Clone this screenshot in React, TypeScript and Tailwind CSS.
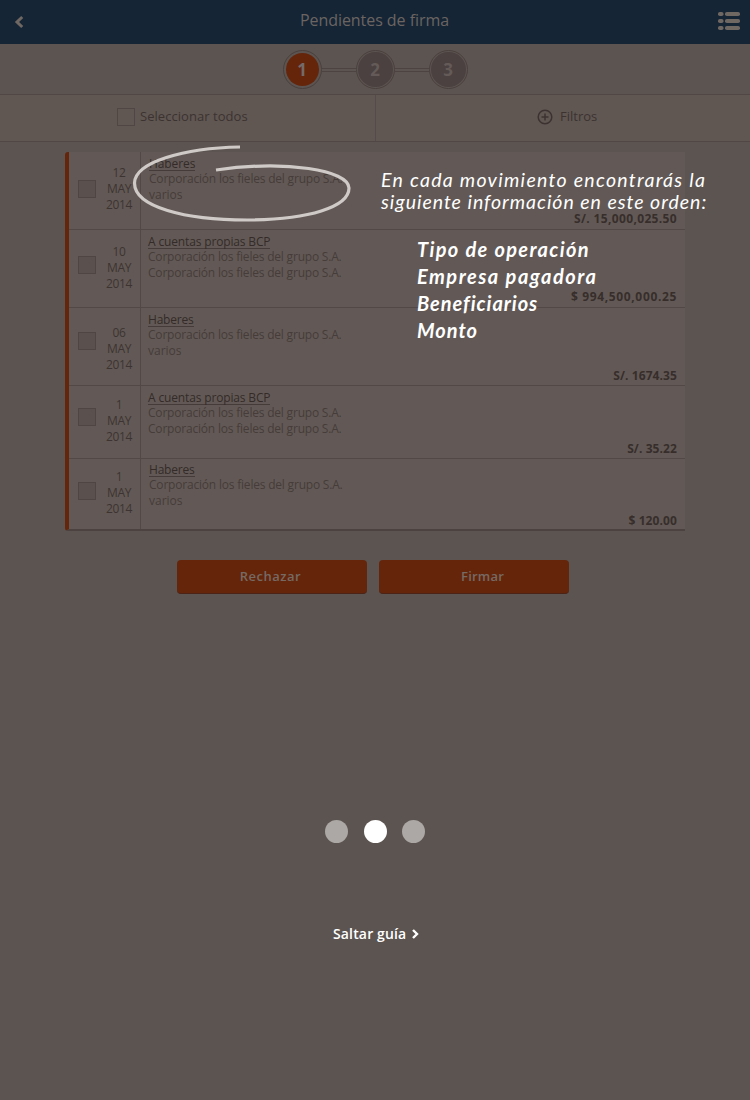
import React from "react";

type Movement = {
  day: string;
  title: string;
  titleTracking: string;
  beneficiary: string;
  amount: string;
  amountStyle: string;
  height: string;
  checkOffset: string;
  dateOffset: string;
  textOffset: string;
};

const COMPANY = "Corporación los fieles del grupo S.A.";

const movements: Movement[] = [
  { day: "12", title: "Haberes", titleTracking: "tracking-[-0.1px]", beneficiary: "varios", amount: "S/. 15,000,025.50", amountStyle: "tracking-[0.35px] pb-px", height: "h-[78px]", checkOffset: "mt-[28px]", dateOffset: "mt-[13px]", textOffset: "pt-[4px] pl-[8px]" },
  { day: "10", title: "A cuentas propias BCP", titleTracking: "tracking-[-0.15px]", beneficiary: COMPANY, amount: "$ 994,500,000.25", amountStyle: "tracking-[0.65px] pb-px", height: "h-[78px]", checkOffset: "mt-[26px]", dateOffset: "mt-[14px]", textOffset: "pt-[4px] pl-[7px]" },
  { day: "06", title: "Haberes", titleTracking: "tracking-[-0.2px]", beneficiary: "varios", amount: "S/. 1674.35", amountStyle: "tracking-[0.1px]", height: "h-[78px]", checkOffset: "mt-[24px]", dateOffset: "mt-[17px]", textOffset: "pt-[4px] pl-[7px]" },
  { day: "1", title: "A cuentas propias BCP", titleTracking: "tracking-[-0.15px]", beneficiary: COMPANY, amount: "S/. 35.22", amountStyle: "tracking-[0.1px]", height: "h-[73px]", checkOffset: "mt-[22px]", dateOffset: "mt-[11px]", textOffset: "pt-[4px] pl-[7px]" },
  { day: "1", title: "Haberes", titleTracking: "tracking-[-0.2px]", beneficiary: "varios", amount: "$ 120.00", amountStyle: "tracking-[0.1px] -mb-px", height: "h-[70px]", checkOffset: "mt-[23px]", dateOffset: "mt-[10px]", textOffset: "pt-[3px] pl-[8px]" },
];

function Header() {
  return (
    <header className="flex h-[44px] items-center bg-[#152536]">
      <svg className="ml-[14px] h-[14px] w-[10px]" viewBox="0 0 10 14" fill="none" stroke="#6f6762" strokeWidth="3">
        <path d="M8.200 2L3 7L8.200 12" />
      </svg>
      <h1 className="flex-1 pb-[4px] pl-[8px] text-center font-['Open_Sans',sans-serif] text-[16px] tracking-[-0.05px] text-[#6b6461]">
        Pendientes de firma
      </h1>
      <svg className="mr-[9px] mb-[2px] h-[20px] w-[24px]" viewBox="0 0 24 20" fill="#6f6762">
        {[1, 8, 15].map((y) => (
          <g key={y}>
            <rect x="1" y={y} width="5.500" height="4" rx="1.800" />
            <rect x="8" y={y} width="15" height="4" rx="1.800" />
          </g>
        ))}
      </svg>
    </header>
  );
}

function Step({ label, active }: { label: string; active?: boolean }) {
  return (
    <div className="flex h-[39px] w-[39px] shrink-0 items-center justify-center rounded-full border border-[#4a403d]">
      <div
        className={
          "flex items-center justify-center rounded-full pt-px font-['Open_Sans',sans-serif] text-[17px] font-bold " +
          (active ? "h-[33px] w-[33px] bg-[#65250b] text-[#736b67]" : "h-[35px] w-[35px] bg-[#4b4140] text-[#645b58]")
        }
      >
        {label}
      </div>
    </div>
  );
}

function Connector() {
  return <div className="h-[4px] flex-1 border-y border-[#4d4340]" />;
}

function Row({ m, last }: { m: Movement; last: boolean }) {
  return (
    <div className={"flex " + m.height + (last ? "" : " border-b border-[#524845]")}>
      <div className="flex w-[72px] border-r border-[#524845]">
        <div className={"ml-[9px] h-[18px] w-[18px] border border-[#4f4542] bg-[#5a504d] " + m.checkOffset} />
        <div className={"ml-[8px] w-[30px] text-center text-[12px] leading-[16px] tracking-[-0.3px] text-[#3d3431] " + m.dateOffset}>
          <div>{m.day}</div>
          <div>MAY</div>
          <div>2014</div>
        </div>
      </div>
      <div className={"flex-1 whitespace-nowrap text-[12px] text-[#463c39] " + m.textOffset}>
        <div className="h-[15px] leading-[15px]">
          <span className={"inline-block h-[15px] border-b border-[#453b38] text-[#342b28] " + m.titleTracking}>{m.title}</span>
        </div>
        <div className="leading-[16px] tracking-[-0.2px]">{COMPANY}</div>
        <div className={"leading-[16px] " + (m.beneficiary === COMPANY ? "tracking-[-0.2px]" : "tracking-[0px]")}>{m.beneficiary}</div>
      </div>
      <div className={"self-end pr-[8px] text-[12px] leading-[19px] font-bold text-[#372e2b] " + m.amountStyle}>{m.amount}</div>
    </div>
  );
}

function Guide() {
  return (
    <div className="absolute inset-0 font-['Lato',sans-serif] text-white italic">
      <svg className="absolute inset-0 h-[240px] w-[400px]" viewBox="0 0 400 240" fill="none" stroke="#cfcac7" strokeWidth="3.200">
        <path d="M240 147C184 148 135 162 134.500 183C134.500 207 185 220 247 220C309 219.500 349 207 349 188C348.500 170 286 160 216 170" />
      </svg>
      <div className="absolute top-[169px] left-[381px] text-[19.5px] leading-[22px] whitespace-nowrap">
        <p className="tracking-[1.28px]">En cada movimiento encontrarás la</p>
        <p className="tracking-[0.98px]">siguiente información en este orden:</p>
      </div>
      <ul className="absolute top-[236px] left-[417px] text-[20px] leading-[27px] font-bold whitespace-nowrap">
        <li className="tracking-[1.35px]">Tipo de operación</li>
        <li className="tracking-[1.5px]">Empresa pagadora</li>
        <li className="tracking-[0.95px]">Beneficiarios</li>
        <li className="tracking-[1px]">Monto</li>
      </ul>
    </div>
  );
}

export default function App() {
  return (
    <div className="relative flex h-[1100px] w-[750px] flex-col overflow-hidden bg-[#5c5450] font-['Open_Sans',sans-serif]">
      <Header />
      <div className="flex h-[50px] items-center justify-center pt-px">
        <div className="flex w-[185px] items-center">
          <Step label="1" active />
          <Connector />
          <Step label="2" />
          <Connector />
          <Step label="3" />
        </div>
      </div>
      <div className="flex h-[48px] border-y border-[#514845] bg-[#605753] text-[13px] text-[#3c3330]">
        <div className="flex w-[376px] items-center border-r border-[#554c49] pb-[2px] pl-[117px]">
          <div className="h-[18px] w-[18px] border border-[#504744]" />
          <span className="ml-[5px] pb-px tracking-[0.05px]">Seleccionar todos</span>
        </div>
        <div className="flex items-center pb-[3px] pl-[161px]">
          <svg className="h-[16px] w-[16px]" viewBox="0 0 16 16" fill="none" stroke="#3c3330" strokeWidth="1.500">
            <circle cx="8" cy="8" r="6.800" />
            <path d="M8 4.500V11.500M4.500 8H11.500" />
          </svg>
          <span className="ml-[7px]">Filtros</span>
        </div>
      </div>
      <div className="mt-[10px] ml-[65px] w-[620px] rounded-l-[3px] border-b-2 border-l-4 border-b-[#4c4340] border-l-[#65250b] bg-[#625956]">
        {movements.map((m, i) => (
          <Row key={i} m={m} last={i === movements.length - 1} />
        ))}
      </div>
      <div className="mt-[29px] ml-[177px] flex gap-[12px] text-[13px] font-semibold text-[#766a63]">
        <button className="h-[34px] w-[190px] rounded-[4px] border-b border-[#4b2417] bg-[#65250b] pr-[3px] tracking-[0.5px]">Rechazar</button>
        <button className="h-[34px] w-[190px] rounded-[4px] border-b border-[#4b2417] bg-[#65250b] pl-[17px] tracking-[0.2px]">Firmar</button>
      </div>
      <div className="mt-[226px] flex justify-center gap-[15.5px]">
        <span className="h-[23px] w-[23px] rounded-full bg-[#aca8a5]" />
        <span className="h-[23px] w-[23px] rounded-full bg-white" />
        <span className="h-[23px] w-[23px] rounded-full bg-[#aca8a5]" />
      </div>
      <div className="mt-[81px] ml-[333px] flex items-center text-[14px] leading-[20px] font-semibold whitespace-nowrap text-white">
        <span className="w-[74px] tracking-[0.15px]">Saltar guía</span>
        <svg className="ml-[4px] h-[10px] w-[8px]" viewBox="0 0 8 10" fill="none" stroke="white" strokeWidth="2.400">
          <path d="M2 1L6 5L2 9" />
        </svg>
      </div>
      <Guide />
    </div>
  );
}
